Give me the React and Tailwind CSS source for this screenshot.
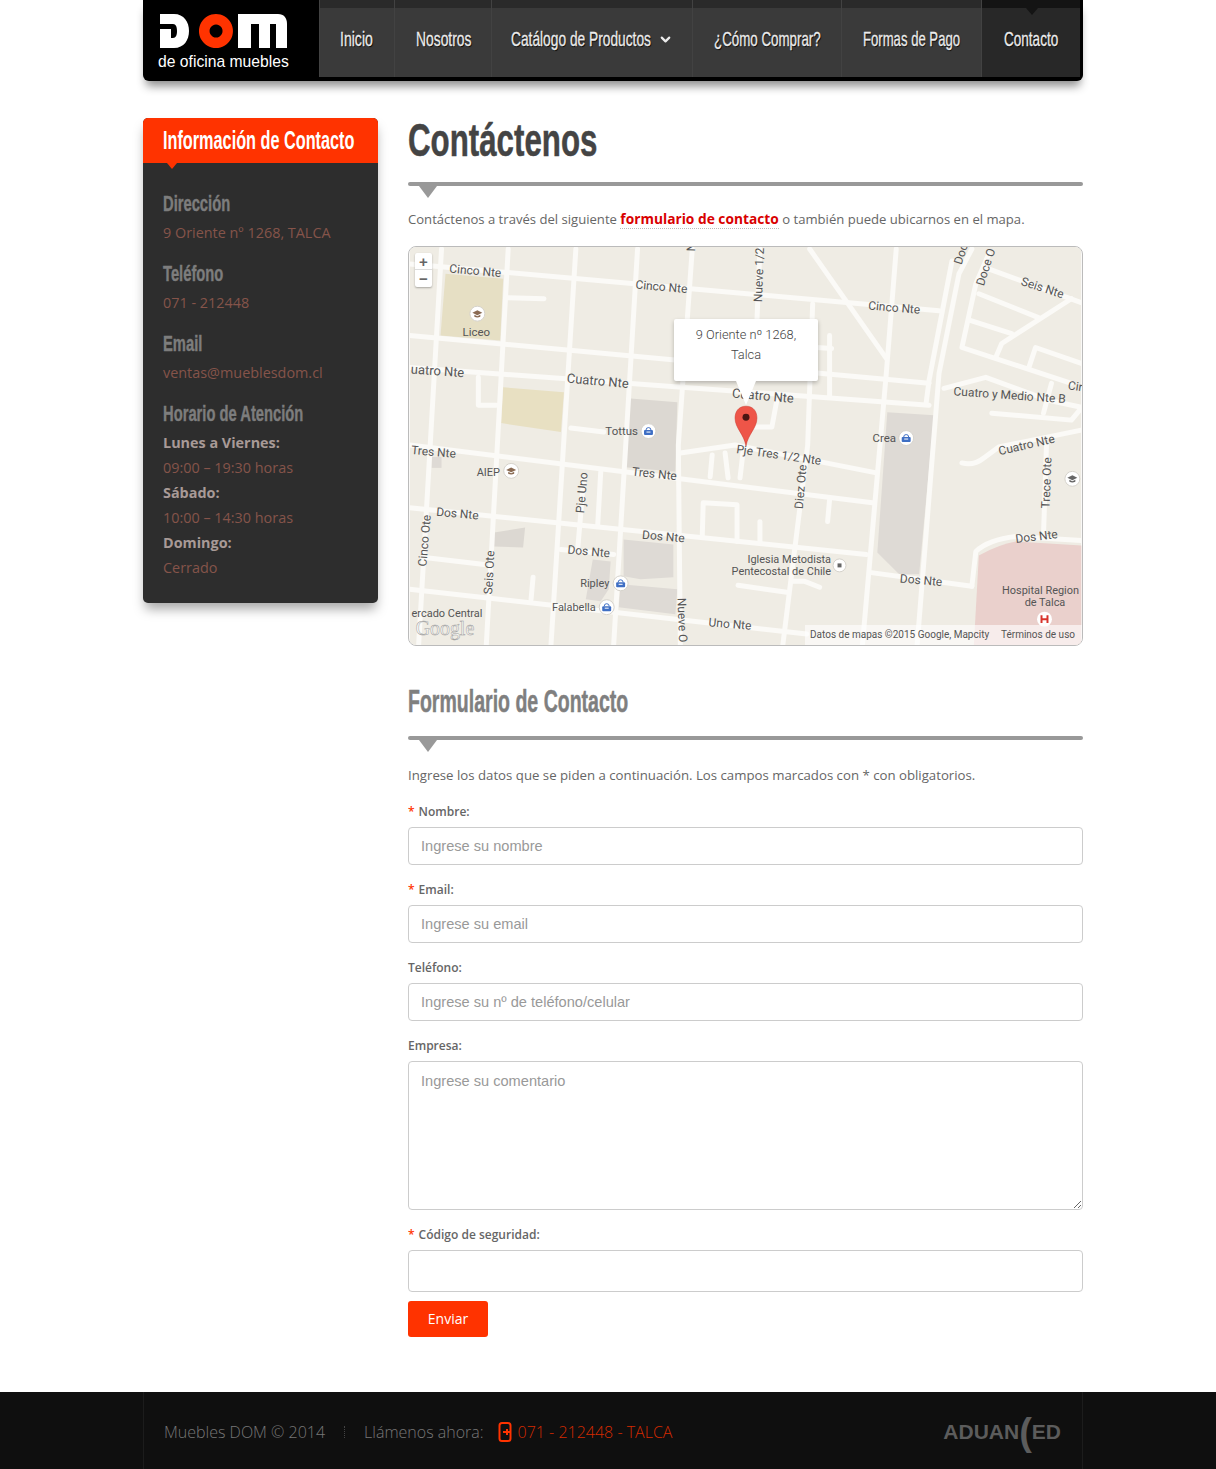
import { ChevronDown } from "lucide-react";

const navItems = [
  { label: "Inicio", width: "w-[75px]", textWidth: "w-[34px]", scale: "scale-x-[0.67]" },
  { label: "Nosotros", width: "w-[97px]", textWidth: "w-[55px]", scale: "scale-x-[0.66]" },
  { label: "Catálogo de Productos", width: "w-[201px]", textWidth: "w-[140px]", scale: "scale-x-[0.655]", caret: true },
  { label: "¿Cómo Comprar?", width: "w-[149px]", textWidth: "w-[107px]", scale: "scale-x-[0.635]" },
  { label: "Formas de Pago", width: "w-[140px]", textWidth: "w-[97px]", scale: "scale-x-[0.625]" },
  { label: "Contacto", width: "w-[99px]", textWidth: "w-[55px]", scale: "scale-x-[0.645]", active: true },
];

const contactInfo = [
  { title: "Dirección", value: "9 Oriente nº 1268, TALCA" },
  { title: "Teléfono", value: "071 - 212448" },
  { title: "Email", value: "ventas@mueblesdom.cl" },
];

const schedule = [
  { day: "Lunes a Viernes:", hours: "09:00 – 19:30 horas" },
  { day: "Sábado:", hours: "10:00 – 14:30 horas" },
  { day: "Domingo:", hours: "Cerrado" },
];

const roads = [
  "M408 263L940 310",
  "M408 335L930 383",
  "M408 367L930 405",
  "M408 445L873 503",
  "M680 453L735 445L877 473",
  "M408 508L867 555",
  "M560 550L613 555",
  "M408 590L807 635",
  "M870 573L973 587",
  "M973 587L977 552Q990 540 1017 537L1083 541",
  "M440 248L417 646",
  "M507 248L485 646",
  "M575 248L550 646",
  "M637 248L613 646",
  "M692 248L678 445L680 646",
  "M760 248L757 320",
  "M813 303L808 445L783 646",
  "M830 335L830 397",
  "M810 248L887 358",
  "M897 248L887 373L863 646",
  "M973 248L960 273L940 373L918 646",
  "M953 260L930 380L927 403",
  "M990 253L977 283L963 347L1073 383",
  "M987 267L1083 302",
  "M980 293L1040 317",
  "M972 320L1013 333",
  "M1073 298L1003 343L997 357",
  "M1083 363L1037 347L1030 368",
  "M945 388L987 377L1050 400L1083 407",
  "M993 413L1073 420L1083 408",
  "M1053 383L1045 413",
  "M963 463Q975 466 985 458L1000 447L1083 430",
  "M1048 445L1045 535",
  "M507 297L543 298",
  "M477 377L477 405L495 405",
  "M570 428L603 432",
  "M600 472L597 525",
  "M583 478L577 548",
  "M423 558L483 565",
  "M532 578L530 600",
  "M702 538L703 503L737 505L737 542",
  "M712 455L710 477",
  "M725 453L728 478",
  "M743 452L740 478",
  "M830 500L828 522",
  "M760 522L760 543",
  "M738 586L787 593",
  "M793 582L805 582L820 588",
  "M777 400L772 427L740 427",
  "M817 347L832 348",
];

// text, x, y, angle, font size
const labels = [
  ["Cinco Nte", 474, 274, 5, 12],
  ["Cinco Nte", 661, 290, 5, 12],
  ["Cinco Nte", 895, 311, 5, 12],
  ["Seis Nte", 1044, 291, 18, 12],
  ["Doce O", 987, 270, -72, 12],
  ["Doc", 962, 257, -72, 12],
  ["Nueve 1/2", 759, 278, -88, 12],
  ["N", 691, 250, -88, 12],
  ["Liceo", 475, 335, 0, 11.5],
  ["uatro Nte", 436, 375, 4, 13],
  ["Cuatro Nte", 597, 385, 5, 13],
  ["Cuatro Nte", 763, 400, 5, 13],
  ["Cuatro y Medio Nte B", 1011, 399, 4, 12],
  ["Cir", 1077, 390, 8, 12],
  ["Tottus", 621, 435, 0, 11.5],
  ["Crea", 885, 442, 0, 11.5],
  ["Cuatro Nte", 1028, 449, -13, 12],
  ["Tres Nte", 432, 456, 5, 12],
  ["AIEP", 487, 476, 0, 11],
  ["Tres Nte", 654, 478, 6, 12],
  ["Pje Tres 1/2 Nte", 779, 459, 8, 12],
  ["Trece Ote", 1048, 487, -88, 12],
  ["Diez Ote", 801, 491, -85, 12],
  ["Pje Uno", 581, 497, -85, 12],
  ["Dos Nte", 456, 518, 5, 12],
  ["Dos Nte", 663, 541, 5, 12],
  ["Dos Nte", 588, 556, 5, 12],
  ["Dos Nte", 1038, 541, -7, 12],
  ["Dos Nte", 922, 585, 5, 12],
  ["Cinco Ote", 423, 545, -85, 12],
  ["Seis Ote", 488, 577, -87, 12],
  ["Iglesia Metodista", 789.5, 564, 0, 11],
  ["Pentecostal de Chile", 781.5, 576, 0, 11],
  ["Ripley", 594, 588, 0, 11],
  ["Falabella", 573, 612, 0, 11],
  ["ercado Central", 445.5, 618, 0, 11],
  ["Nueve O", 682, 625, 88, 12],
  ["Uno Nte", 730, 629, 5, 12],
  ["Hospital Region", 1042, 595, 0, 11],
  ["de Talca", 1046.5, 607, 0, 11],
];

const pois = [
  { x: 476, y: 313, kind: "school" },
  { x: 648, y: 431, kind: "shop" },
  { x: 907, y: 438, kind: "shop" },
  { x: 510, y: 471, kind: "school" },
  { x: 1074, y: 479, kind: "school", color: "#666" },
  { x: 620, y: 584, kind: "shop" },
  { x: 606, y: 608, kind: "shop" },
];

function Poi({ x, y, kind, color }) {
  return (
    <g>
      <circle cx={x} cy={y} r="7.5" fill="#fff" stroke="#d5d2cb" />
      {kind === "shop" ? (
        <>
          <path d={`M${x - 2.5} ${y - 1}a2.5 2.5 0 0 1 5 0`} fill="none" stroke="#3f6fc4" />
          <rect x={x - 4.5} y={y - 1} width="9" height="5" rx="1" fill="#3f6fc4" />
          <path d={`M${x - 2} ${y + 1}h4`} stroke="#fff" />
        </>
      ) : (
        <>
          <path d={`M${x - 5} ${y - 1}L${x} ${y - 3.5}L${x + 5} ${y - 1}L${x} ${y + 1.5}Z`} fill={color || "#8a6a52"} />
          <path d={`M${x - 3} ${y + 1}v2q3 1.5 6 0v-2L${x} ${y + 2.5}Z`} fill={color || "#8a6a52"} />
        </>
      )}
    </g>
  );
}

function MapPicture() {
  return (
    <svg viewBox="408 246 675 400" className="block w-full h-full">
      <rect x="408" y="246" width="675" height="400" fill="#efece4" />
      <path d="M444 273L502 278L499 340L439 335Z" fill="#e6dfc4" />
      <path d="M502 387L563 392L560 432L500 423Z" fill="#e8e0c2" />
      <path d="M627 398L677 402L675 472L622 467Z" fill="#dcd8d2" />
      <path d="M888 412L935 415L920 575L900 575L878 553Z" fill="#dedad5" />
      <path d="M430 457H440V468H430Z" fill="#dedad5" />
      <path d="M493 533L524 528L522 548L493 547Z" fill="#dcd8d2" />
      <path d="M592 560L610 562L608 590L600 602L585 600Z" fill="#dedad5" />
      <path d="M623 540L673 545L673 578L640 580L623 577Z" fill="#dedad5" />
      <path d="M620 585L677 590L675 615L618 608Z" fill="#dedad5" />
      <path d="M980 556Q1000 545 1017 542L1083 546V646H975Z" fill="#ead0cc" />
      <g fill="none" stroke="#fbfaf7" strokeWidth="5" strokeLinejoin="round" strokeLinecap="round">
        {roads.map((d) => (
          <path key={d} d={d} />
        ))}
      </g>
      <g fontFamily="Roboto, sans-serif" fill="#555" textAnchor="middle">
        {labels.map(([text, x, y, angle, size]) => (
          <text key={text + x} x={x} y={y} fontSize={size} transform={`rotate(${angle} ${x} ${y - 4})`}>
            {text}
          </text>
        ))}
      </g>
      {pois.map((p) => (
        <Poi key={p.x} {...p} />
      ))}
      <circle cx="840" cy="566" r="6.5" fill="#fff" stroke="#d5d2cb" />
      <rect x="838" y="564" width="4" height="4" fill="#666" />
      <circle cx="1046" cy="620" r="7.5" fill="#fff" />
      <path d="M1043 616V624M1049 616V624M1043 620H1049" stroke="#d8342c" strokeWidth="2" fill="none" />
      <text x="414" y="636" fontFamily="'Liberation Serif', serif" fontSize="20" fill="#fff" fillOpacity="0.75" stroke="#9a9a9a" strokeWidth="0.5">
        Google
      </text>
      <path d="M746 406C738 406 735 412 735 418C735 428 744 434 746 446C748 434 757 428 757 418C757 412 754 406 746 406Z" fill="#ee5548" stroke="#c9352b" strokeWidth="0.5" />
      <circle cx="746" cy="417" r="3.5" fill="#4a1512" />
    </svg>
  );
}

function DomLogo() {
  return (
    <svg viewBox="0 0 130 36" className="block w-[130px] h-[36px]">
      <path d="M2 1H16C26 1 31 9 31 18C31 27 26 35 16 35H2V16H13V25H15C18 25 19 22 19 18C19 14 18 11 15 11H2Z" fill="#fff" />
      <path fillRule="evenodd" d="M58 1A17 17 0 1 1 57.9 1ZM58 11.5A6.5 6.5 0 1 0 58.1 11.5Z" fill="#ff3300" />
      <path d="M80 1H120C126 1 129 5 129 11V35H118V11H112V35H101V11H93V35H80Z" fill="#fff" />
    </svg>
  );
}

function Divider() {
  return (
    <div className="relative h-[4px] rounded-full bg-[#999999]">
      <div className="absolute left-[11px] top-[4px] w-0 h-0 border-l-[9px] border-r-[9px] border-t-[12px] border-l-transparent border-r-transparent border-t-[#999999]"></div>
    </div>
  );
}

function SideHeading({ children }) {
  return (
    <div className="h-[25px] text-[22px] leading-[25px] font-bold text-[#7d7d7d] font-['Liberation_Sans',sans-serif] whitespace-nowrap">
      <span className="inline-block origin-left scale-x-[0.67] [-webkit-text-stroke:0.4px_currentColor]">{children}</span>
    </div>
  );
}

function Field({ label, required, placeholder, height = "h-[38px]", gap = "mb-[12px]" }) {
  return (
    <div className={gap}>
      <div className="h-[28px] text-[12px] leading-[26px] font-semibold text-[#666666]">
        {required && <span className="text-[#ff3300] mr-[4px]">*</span>}
        {label}
      </div>
      <input
        placeholder={placeholder}
        className={`block w-full ${height} px-[12px] rounded-[4px] border border-[#cccccc] bg-white text-[14.6px] font-['Liberation_Sans',sans-serif] placeholder:text-[#999999]`}
      />
    </div>
  );
}

export default function App() {
  return (
    <div className="min-h-[1469px] bg-white font-['Open_Sans',sans-serif] text-[14px] text-[#666666]">
      <header className="ml-[143px] w-[940px] h-[81px] flex bg-black rounded-b-[6px] shadow-[0_8px_10px_-3px_rgba(0,0,0,0.45)]">
        <div className="w-[176px] pl-[15px] pt-[13px]">
          <DomLogo />
          <div className="mt-[4px] text-[15.7px] leading-[18px] text-white font-['Liberation_Sans',sans-serif] whitespace-nowrap">de oficina muebles</div>
        </div>
        <nav className="flex h-[77px]">
          {navItems.map((item) => (
            <a
              key={item.label}
              className={`${item.width} relative flex flex-col border-l border-[#424242] text-[#ececec]`}
            >
              <span className={`h-[8px] ${item.active ? "bg-[#141414]" : "bg-[#2a2a2a]"}`}></span>
              <span className={`flex-1 pb-[7px] flex items-center justify-center gap-[7px] text-[21px] [text-shadow:1px_1px_1px_#000] font-['Liberation_Sans',sans-serif] ${item.active ? "bg-[#282828]" : "bg-[#3a3a3a]"}`}>
                <span className={`${item.textWidth} whitespace-nowrap`}>
                  <span className={`inline-block origin-left ${item.scale} [-webkit-text-stroke:0.3px_currentColor]`}>{item.label}</span>
                </span>
                {item.caret && <ChevronDown size={15} strokeWidth={3.5} />}
              </span>
              {item.active && (
                <span className="absolute left-[44px] top-[8px] w-0 h-0 border-l-[6px] border-r-[6px] border-t-[7px] border-l-transparent border-r-transparent border-t-[#141414]"></span>
              )}
            </a>
          ))}
        </nav>
      </header>

      <div className="ml-[143px] w-[940px] mt-[37px] flex gap-[30px] items-start">
        <aside className="w-[235px] h-[485px] bg-[#2d2d2d] rounded-[5px] shadow-[0_8px_12px_-2px_rgba(0,0,0,0.35)] text-[14.4px]">
          <div className="relative h-[45px] pl-[20px] bg-[#ff3300] rounded-t-[5px] text-white text-[25px] font-bold leading-[45px] font-['Liberation_Sans',sans-serif] whitespace-nowrap">
            <span className="inline-block origin-left scale-x-[0.65]">Información de Contacto</span>
            <span className="absolute left-[24px] top-[45px] w-0 h-0 border-l-[5px] border-r-[5px] border-t-[6px] border-l-transparent border-r-transparent border-t-[#ff3300]"></span>
          </div>
          <div className="px-[20px] pt-[28px]">
            {contactInfo.map((c) => (
              <div key={c.title} className="h-[70px]">
                <SideHeading>{c.title}</SideHeading>
                <div className="mt-[4px] h-[25px] leading-[25px] text-[#85544a]">{c.value}</div>
              </div>
            ))}
            <SideHeading>Horario de Atención</SideHeading>
            <div className="mt-[4px] leading-[25px]">
              {schedule.map((s) => (
                <div key={s.day}>
                  <div className="font-bold text-[#a89a97]">{s.day}</div>
                  <div className="text-[#85544a]">{s.hours}</div>
                </div>
              ))}
            </div>
          </div>
        </aside>

        <main className="w-[675px]">
          <h1 className="h-[46px] text-[46px] leading-[44px] font-bold text-[#444444] font-['Liberation_Sans',sans-serif] whitespace-nowrap">
            <span className="inline-block origin-left scale-x-[0.68] [-webkit-text-stroke:0.5px_currentColor]">Contáctenos</span>
          </h1>
          <div className="mt-[18px]"><Divider /></div>
          <p className="mt-[23px] h-[20px] text-[13.1px] leading-[20px]">
            Contáctenos a través del siguiente{" "}
            <a className="text-[13.75px] font-bold text-[#d90000] border-b border-dotted border-[#bbbbbb]">formulario de contacto</a>{" "}
            o también puede ubicarnos en el mapa.
          </p>
          <div className="relative mt-[17px] h-[400px] rounded-[8px] border border-[#bbbbbb] overflow-hidden">
            <MapPicture />
            <div className="absolute left-[6px] top-[6px] w-[17px] h-[34px] bg-white rounded-[2px] shadow-[0_1px_2px_rgba(0,0,0,0.3)] flex flex-col items-center text-[#666666] text-[15px] font-bold leading-[17px] font-['Liberation_Sans',sans-serif]">
              <span className="h-[17px] border-b border-[#dddddd] w-full text-center">+</span>
              <span className="h-[17px]">−</span>
            </div>
            <div className="absolute left-[265px] top-[72px] w-[144px] h-[62px] bg-white rounded-[2px] shadow-[0_2px_4px_rgba(0,0,0,0.25)] pt-[6px] text-center text-[12.8px] font-light leading-[20px] text-[#444444] font-['Roboto',sans-serif]">
              <div>9 Oriente nº 1268,</div>
              <div>Talca</div>
            </div>
            <div className="absolute left-[327px] top-[134px] w-0 h-0 border-l-[10px] border-r-[10px] border-t-[24px] border-l-transparent border-r-transparent border-t-white"></div>
            <div className="absolute right-0 bottom-0 h-[20px] w-[277px] pb-[2px] flex items-center justify-between pl-[5px] pr-[7px] bg-white/60 text-[10px] text-[#555555] font-['Roboto',sans-serif]">
              <span>Datos de mapas ©2015 Google, Mapcity</span>
              <span>Términos de uso</span>
            </div>
          </div>

          <h2 className="mt-[39px] h-[34px] text-[31px] leading-[34px] font-bold text-[#7f7f7f] font-['Liberation_Sans',sans-serif] whitespace-nowrap">
            <span className="inline-block origin-left scale-x-[0.63] [-webkit-text-stroke:0.5px_currentColor]">Formulario de Contacto</span>
          </h2>
          <div className="mt-[17px]"><Divider /></div>
          <p className="mt-[25px] h-[20px] text-[13.23px] leading-[20px] mb-[14px]">
            Ingrese los datos que se piden a continuación. Los campos marcados con * con obligatorios.
          </p>
          <Field label="Nombre:" required placeholder="Ingrese su nombre" />
          <Field label="Email:" required placeholder="Ingrese su email" />
          <Field label="Teléfono:" placeholder="Ingrese su nº de teléfono/celular" />
          <div className="mb-[12px]">
            <div className="h-[28px] text-[12px] leading-[26px] font-semibold text-[#666666]">Empresa:</div>
            <textarea
              placeholder="Ingrese su comentario"
              className="block w-full h-[149px] px-[12px] py-[9px] rounded-[4px] border border-[#cccccc] bg-white text-[14.6px] font-['Liberation_Sans',sans-serif] placeholder:text-[#999999]"
            />
          </div>
          <Field label="Código de seguridad:" required height="h-[42px]" gap="mb-[9px]" />
          <button className="block w-[80px] h-[36px] pb-[2px] rounded-[3px] bg-[#ff3300] text-white text-[14px]">Enviar</button>
        </main>
      </div>

      <footer className="mt-[55px] h-[77px] bg-[#0f0f0f]">
        <div className="ml-[143px] w-[940px] h-full pt-[2px] flex items-center justify-between pl-[20px] pr-[21px] border-x border-[#1c1c1c] text-[16px] font-light text-[#777777]">
          <div className="flex items-center">
            <span>Muebles DOM © 2014</span>
            <span className="mx-[19px] h-[12px] border-l border-dotted border-[#444444]"></span>
            <span>Llámenos ahora:</span>
            <svg viewBox="0 0 14 20" className="ml-[14px] mr-[6px] w-[14px] h-[20px]">
              <rect x="1.5" y="1" width="11" height="18" rx="2.5" fill="none" stroke="#ff3300" strokeWidth="2" />
              <path d="M5 10H12M9 7V13" stroke="#ff3300" strokeWidth="2" />
            </svg>
            <span className="text-[#d42a00]">071 - 212448 - TALCA</span>
          </div>
          <div className="flex items-center text-[21px] font-bold leading-none text-[#5c5c5c] font-['Liberation_Sans',sans-serif]">
            ADUAN<span className="text-[38px] leading-none">(</span>ED
          </div>
        </div>
      </footer>
    </div>
  );
}
